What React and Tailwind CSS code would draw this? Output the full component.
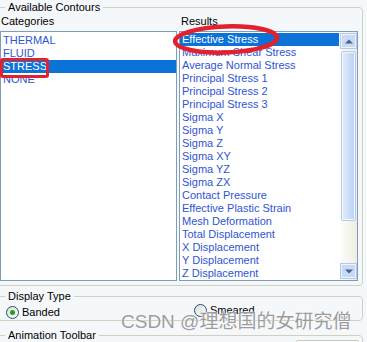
import React from "react";

const categories = ["THERMAL", "FLUID", "STRESS", "NONE"];

const results = [
  "Effective Stress",
  "Maximum Shear Stress",
  "Average Normal Stress",
  "Principal Stress 1",
  "Principal Stress 2",
  "Principal Stress 3",
  "Sigma X",
  "Sigma Y",
  "Sigma Z",
  "Sigma XY",
  "Sigma YZ",
  "Sigma ZX",
  "Contact Pressure",
  "Effective Plastic Strain",
  "Mesh Deformation",
  "Total Displacement",
  "X Displacement",
  "Y Displacement",
  "Z Displacement",
];

function ListRow({ label, selected }) {
  return (
    <div
      className={`h-[13px] leading-[13px] pl-[2px] whitespace-nowrap ${
        selected ? "bg-[#0b72d8] text-white" : "text-[#2f55d2]"
      }`}
    >
      {label}
    </div>
  );
}

function ScrollButton({ up }) {
  return (
    <div className="h-[16px] border border-[#b4c8ee] bg-[#c6d9f7] shadow-[inset_0_0_0_1px_#eef4fe] flex items-center justify-center">
      <svg width="8" height="5" viewBox="0 0 8 5">
        {up ? (
          <path d="M0 4.5 L4 0.5 L8 4.5 Z" fill="#4d6185" />
        ) : (
          <path d="M0 0.5 L4 4.5 L8 0.5 Z" fill="#4d6185" />
        )}
      </svg>
    </div>
  );
}

function Radio({ checked, label, className }) {
  return (
    <label className={`flex items-center gap-[3px] ${className}`}>
      <span className="w-[13px] h-[13px] rounded-full border border-[#1d5281] bg-gradient-to-br from-[#dcdcd4] to-white flex items-center justify-center">
        {checked && <span className="w-[5px] h-[5px] rounded-full bg-[#21a121]" />}
      </span>
      <span className="leading-[13px]">{label}</span>
    </label>
  );
}

export default function App() {
  return (
    <div
      className="relative w-[367px] h-[342px] overflow-hidden bg-[#f5f8fb] text-[11px] text-black"
      style={{ fontFamily: '"Liberation Sans", Arial, sans-serif' }}
    >
      <fieldset className="ml-[-3px] w-[366px] border border-[#d0d0bf] rounded-[4px] pb-[4px]">
        <legend className="ml-[7px] px-[3px] leading-[14px]">Available Contours</legend>
        <div className="flex pl-[2px] gap-[2px]">
          <div className="w-[177px] flex flex-col">
            <div className="h-[17px] pt-[1px] pl-[1px] leading-[13px]">Categories</div>
            <div className="h-[250px] border border-[#7f9db9] bg-white pt-[2px]">
              {categories.map((c) => (
                <ListRow key={c} label={c} selected={c === "STRESS"} />
              ))}
            </div>
          </div>
          <div className="w-[179px] flex flex-col">
            <div className="h-[17px] pt-[1px] pl-[2px] leading-[13px]">Results</div>
            <div className="h-[250px] border border-[#7f9db9] bg-white flex overflow-hidden">
              <div className="flex-1 pt-[1px] pr-[1px] overflow-hidden">
                {results.map((r, i) => (
                  <ListRow key={r} label={r} selected={i === 0} />
                ))}
              </div>
              <div className="w-[17px] py-[1px] flex flex-col bg-gradient-to-r from-[#fdfdfa] to-[#eeede4]">
                <ScrollButton up />
                <div className="mt-[2px] h-[170px] mx-[1px] rounded-[2px] border border-[#b4c8ee] bg-gradient-to-r from-[#e4eefc] to-[#b8cff5] shadow-[inset_0_0_0_1px_#f4f8ff]" />
                <div className="flex-1" />
                <ScrollButton />
              </div>
            </div>
          </div>
        </div>
      </fieldset>

      <fieldset className="mt-[3px] ml-[-3px] w-[366px] h-[32px] border border-[#d0d0bf] rounded-[4px]">
        <legend className="ml-[7px] px-[3px] leading-[14px]">Display Type</legend>
        <div className="flex items-start pl-[8px] pt-[1px]">
          <Radio checked label="Banded" className="mt-[2px]" />
          <Radio label="Smeared" className="ml-[134px]" />
        </div>
      </fieldset>

      <fieldset className="mt-[7px] ml-[-3px] w-[366px] h-[40px] border border-[#d0d0bf] rounded-[4px]">
        <legend className="ml-[7px] px-[3px] leading-[14px]">Animation Toolbar</legend>
        <div className="-mt-[2px] ml-auto mr-[3px] w-[63px] h-[12px] border border-[#c8c8c0] bg-white rounded-[2px]" />
      </fieldset>

      {/* red annotations */}
      <div className="absolute left-0 top-[58px] w-[49px] h-[20px] border-[3px] border-[#e3202b] rounded-[3px]" />
      <svg className="absolute left-[170px] top-[22px]" width="114" height="36" viewBox="0 0 114 36">
        <ellipse
          cx="56"
          cy="17.5"
          rx="51"
          ry="13"
          fill="none"
          stroke="#e3202b"
          strokeWidth="4.5"
          transform="rotate(-2 56 17.5)"
        />
      </svg>

      {/* watermark */}
      <div
        className="absolute left-[121px] top-[309px] text-[19px] leading-[26px] text-[#9c9c9c] whitespace-nowrap [text-shadow:0_0_2px_#fff,0_0_1px_#fff]"
        style={{ fontFamily: '"Liberation Sans", "Noto Sans CJK SC", sans-serif' }}
      >
        CSDN @理想国的女研究僧
      </div>
    </div>
  );
}
